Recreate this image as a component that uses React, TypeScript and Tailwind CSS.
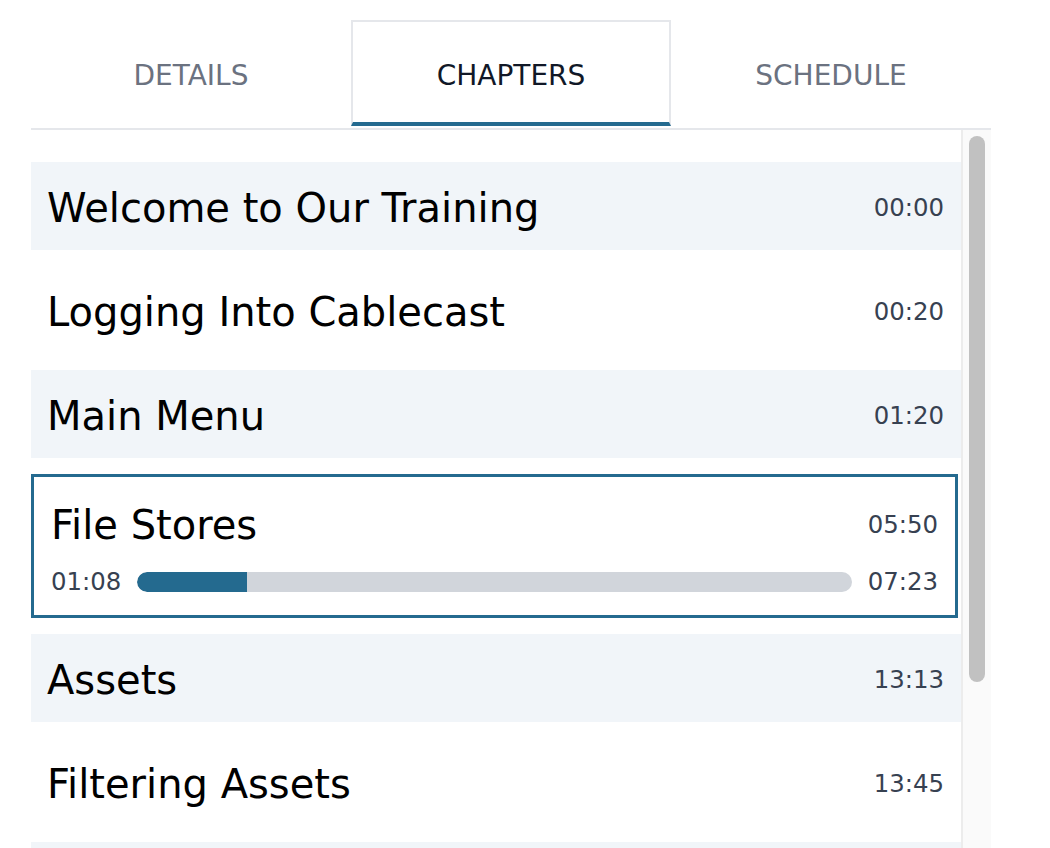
import React from "react";

const chapters = [
  { title: "Welcome to Our Training", time: "00:00" },
  { title: "Logging Into Cablecast", time: "00:20" },
  { title: "Main Menu", time: "01:20" },
  { title: "File Stores", time: "05:50", active: true },
  { title: "Assets", time: "13:13" },
  { title: "Filtering Assets", time: "13:45" },
  { title: "", time: "" },
];

export default function App() {
  const progress = (68 / 443) * 100;
  return (
    <div
      className="h-[848px] w-[1050px] overflow-hidden bg-white pt-[20px] pl-[31px]"
      style={{ fontFamily: '"DejaVu Sans", Verdana, sans-serif' }}
    >
      <div className="w-[960px]">
        <div className="flex h-[106px]">
          <div className="flex w-[320px] items-center justify-center pt-[6px] text-[28px] text-[#6b7280]">
            DETAILS
          </div>
          <div className="flex w-[320px] items-center justify-center border-x-2 border-t-2 border-b-4 border-x-[#e5e7eb] border-t-[#e5e7eb] border-b-[#246a8f] pt-[8px] text-[28px] text-[#111827]">
            CHAPTERS
          </div>
          <div className="flex w-[320px] items-center justify-center pt-[6px] text-[28px] text-[#6b7280]">
            SCHEDULE
          </div>
        </div>
        <div className="mt-[2px] flex h-[720px] border-t-2 border-[#e5e7eb]">
          <div className="flex flex-1 flex-col gap-4 overflow-hidden pt-[32px]">
            {chapters.map((c, i) =>
              c.active ? (
                <div
                  key={i}
                  className="mr-[3px] flex shrink-0 flex-col gap-[15px] border-[3px] border-[#246a8f] bg-white pt-[20px] pr-[17px] pb-[19px] pl-[17px]"
                >
                  <div className="flex h-[56px] items-center justify-between">
                    <span className="text-[40px] text-black">{c.title}</span>
                    <span className="text-[24.4px] text-[#374151]">{c.time}</span>
                  </div>
                  <div className="flex h-[28px] items-center gap-[16px]">
                    <span className="text-[24.4px] text-[#374151]">01:08</span>
                    <div className="h-[20px] flex-1 overflow-hidden rounded-full bg-[#d1d5db]">
                      <div
                        className="h-full rounded-l-full bg-[#246a8f]"
                        style={{ width: `${progress}%` }}
                      />
                    </div>
                    <span className="text-[24.4px] text-[#374151]">07:23</span>
                  </div>
                </div>
              ) : (
                <div
                  key={i}
                  className={`flex h-[88px] shrink-0 items-center justify-between pt-[4px] pr-[17px] pl-[16px] ${
                    i % 2 === 0 ? "bg-[#f1f5f9]" : "bg-white"
                  }`}
                >
                  <span className="text-[40px] text-black">{c.title}</span>
                  <span className="text-[24.4px] text-[#374151]">{c.time}</span>
                </div>
              )
            )}
          </div>
          <div className="w-[30px] shrink-0 border-l-2 border-[#ececec] bg-[#fafafa] pt-[6px] pl-[6px]">
            <div className="h-[546px] w-[16px] rounded-full bg-[#c1c1c1]" />
          </div>
        </div>
      </div>
    </div>
  );
}
